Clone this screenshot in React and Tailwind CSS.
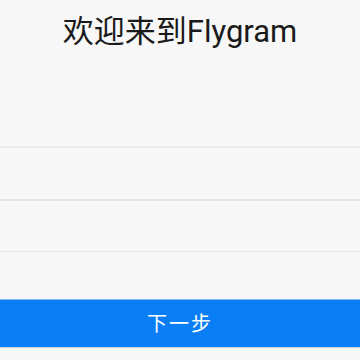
import React from 'react';

const App = () => {
  return (
    <div
      className="w-[360px] h-[360px] bg-[#f7f7f7] flex flex-col overflow-hidden"
      style={{ fontFamily: 'Roboto, "Noto Sans CJK SC", sans-serif' }}
    >
      {/* Title */}
      <div className="h-[62px] flex items-center justify-center">
        <h1 className="text-[31px] leading-none text-[#1a1a1a]">欢迎来到Flygram</h1>
      </div>

      {/* Fields */}
      <div className="h-[84px]" />
      <div className="h-[2px] bg-[#ececec]" />
      <div className="h-[51px]" />
      <div className="h-[2px] bg-[#e6e6e6]" />
      <div className="h-[50px]" />
      <div className="h-[1px] bg-[#e4e4e4]" />
      <div className="h-[47px]" />

      {/* Next button */}
      <button className="h-[48px] w-full bg-[#0a7ff5] border-t border-[#7fb8f4] text-white text-[20px] tracking-[2px] shadow-[0_1px_1px_rgba(0,0,0,0.15)]">
        下一步
      </button>
    </div>
  );
};

export default App;
